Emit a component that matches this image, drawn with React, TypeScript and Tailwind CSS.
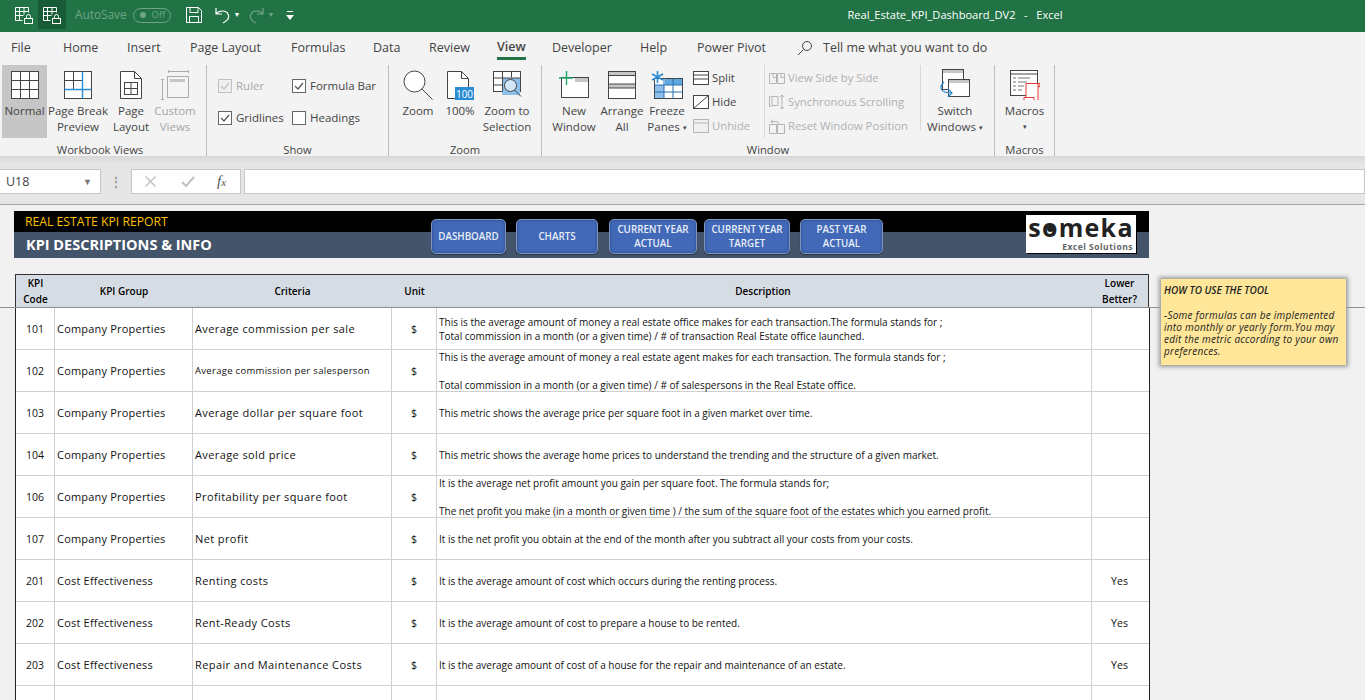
const rows = [
  { code: "101", group: "Company Properties", criteria: "Average commission per sale", unit: "$", lines: ["This is the average amount of money a real estate office makes for each transaction.The formula stands for ;", "Total commission in a month (or a given time) / # of transaction Real Estate office launched."], lower: "" },
  { code: "102", group: "Company Properties", criteria: "Average commission per salesperson", small: true, unit: "$", lines: ["This is the average amount of money a real estate agent makes for each transaction. The formula stands for ;", "", "Total commission in a month (or a given time) / # of salespersons in the Real Estate office."], lower: "" },
  { code: "103", group: "Company Properties", criteria: "Average dollar per square foot", unit: "$", lines: ["This metric shows the average price per square foot in a given market over time."], lower: "" },
  { code: "104", group: "Company Properties", criteria: "Average sold price", unit: "$", lines: ["This metric shows the average home prices to understand the trending and the structure of a given market."], lower: "" },
  { code: "106", group: "Company Properties", criteria: "Profitability per square foot", unit: "$", lines: ["It is the average net profit amount you gain per square foot. The formula stands for;", "", "The net profit you make (in a month or given time ) / the sum of the square foot of the estates which you earned profit."], lower: "" },
  { code: "107", group: "Company Properties", criteria: "Net profit", unit: "$", lines: ["It is the net profit you obtain at the end of the month after you subtract all your costs from your costs."], lower: "" },
  { code: "201", group: "Cost Effectiveness", criteria: "Renting costs", unit: "$", lines: ["It is the average amount of cost which occurs during the renting process."], lower: "Yes" },
  { code: "202", group: "Cost Effectiveness", criteria: "Rent-Ready Costs", unit: "$", lines: ["It is the average amount of cost to prepare a house to be rented."], lower: "Yes" },
  { code: "203", group: "Cost Effectiveness", criteria: "Repair and Maintenance Costs", unit: "$", lines: ["It is the average amount of cost of a house for the repair and maintenance of an estate."], lower: "Yes" },
];

const tabs = [
  { label: "File", cls: "w-[63px] pl-[11px]" },
  { label: "Home", cls: "w-[64px]" },
  { label: "Insert", cls: "w-[63px]" },
  { label: "Page Layout", cls: "w-[101px]" },
  { label: "Formulas", cls: "w-[82px]" },
  { label: "Data", cls: "w-[56px]" },
  { label: "Review", cls: "w-[68px]" },
  { label: "View", cls: "w-[55px]", active: true },
  { label: "Developer", cls: "w-[88px]" },
  { label: "Help", cls: "w-[57px]" },
  { label: "Power Pivot", cls: "w-[100px]" },
];

const gridCols = "grid grid-cols-[39px_138px_199px_45px_655px_58px]";

function TableLock() {
  return (
    <svg width="20" height="20" viewBox="0 0 20 20" fill="none" stroke="#fff" strokeWidth="1">
      <path d="M1.5 2.5h13v5M1.5 2.5v13h7M1.5 6.5h13M1.5 10.5h8M5.5 2.5v13M10 2.5v7" />
      <rect x="10.5" y="13.5" width="8" height="5" />
      <path d="M12.5 13.5v-2a2 2 0 0 1 4 0v2" />
    </svg>
  );
}

function GridIcon() {
  return (
    <svg width="30" height="30" viewBox="0 0 30 30" fill="#fff" stroke="#444" strokeWidth="1">
      <rect x="1.5" y="1.5" width="27" height="27" />
      <path d="M10.5 1.5v27M19.5 1.5v27M1.5 10.5h27M1.5 19.5h27" fill="none" />
    </svg>
  );
}

function PageBreakIcon() {
  return (
    <svg width="30" height="30" viewBox="0 0 30 30" fill="none" stroke="#444" strokeWidth="1">
      <rect x="1.5" y="1.5" width="27" height="27" fill="#fff" />
      <path d="M10.5 1.5v18M1.5 10.5h18" />
      <path d="M1.5 19.5h27M19.5 1.5v27" stroke="#2a8dd4" strokeWidth="1.4" />
    </svg>
  );
}

function PageLayoutIcon() {
  return (
    <svg width="24" height="30" viewBox="0 0 24 30" fill="none" stroke="#444" strokeWidth="1">
      <path d="M1.5 1.5h14l7 7v20h-21z" fill="#fff" />
      <path d="M15.5 1.5v7h7" />
      <rect x="5.5" y="12.5" width="13" height="12" />
      <path d="M5.5 18.5h13M12 12.5v12" />
    </svg>
  );
}

function CustomViewsIcon() {
  return (
    <svg width="30" height="32" viewBox="0 0 30 32" fill="none" stroke="#aaa" strokeWidth="1">
      <path d="M1 10.5h3M2.5 10.5v20M1 30.5h3M8.5 1v3M8.5 2.5h20M28.5 1v3" />
      <rect x="7.5" y="7.5" width="21" height="21" fill="#f4f4f4" />
      <rect x="10" y="10" width="15" height="3" fill="#c6c6c6" stroke="none" />
    </svg>
  );
}

function ZoomIcon() {
  return (
    <svg width="32" height="32" viewBox="0 0 32 32" fill="none" stroke="#444" strokeWidth="1">
      <circle cx="12.5" cy="12.5" r="10.5" fill="#fff" />
      <path d="M20 20l10.5 10.5" />
    </svg>
  );
}

function HundredIcon() {
  return (
    <svg width="28" height="30" viewBox="0 0 28 30" fill="none" stroke="#444" strokeWidth="1">
      <path d="M1.5 1.5h14l7 7v20h-21z" fill="#fff" />
      <path d="M15.5 1.5v7h7" />
      <rect x="9" y="17" width="19" height="13" fill="#2a8dd4" stroke="none" />
      <text x="18.5" y="27.5" textAnchor="middle" fontSize="10" fill="#fff" stroke="none">100</text>
    </svg>
  );
}

function ZoomSelectionIcon() {
  return (
    <svg width="30" height="30" viewBox="0 0 30 30" fill="none" stroke="#444" strokeWidth="1">
      <rect x="1.5" y="1.5" width="27" height="20" fill="#fff" />
      <rect x="10" y="8" width="18" height="17" fill="#8cc0ea" stroke="none" />
      <path d="M1.5 8h27M1.5 15h9M10.5 1.5v20M19.5 1.5v6" />
      <circle cx="18.5" cy="15.5" r="6" fill="#fff" fillOpacity="0.6" />
      <path d="M22.5 20l6.5 6.5" />
    </svg>
  );
}

function NewWindowIcon() {
  return (
    <svg width="30" height="28" viewBox="0 0 30 28" fill="none">
      <rect x="2.5" y="6.5" width="27" height="20" fill="#fff" stroke="#444" />
      <rect x="16" y="7" width="13" height="4" fill="#c6c6c6" />
      <path d="M7.5 0v14M0 7h14" stroke="#21a366" strokeWidth="1.4" />
    </svg>
  );
}

function ArrangeIcon() {
  return (
    <svg width="28" height="28" viewBox="0 0 28 28" fill="#fff" stroke="#444">
      <rect x="0.5" y="0.5" width="27" height="27" />
      <rect x="1" y="1" width="26" height="3.5" fill="#c6c6c6" stroke="none" />
      <rect x="1" y="13" width="26" height="4" fill="#c6c6c6" stroke="none" />
      <path d="M0.5 4.5h27M0.5 13h27M0.5 17h27" fill="none" />
    </svg>
  );
}

function FreezeIcon() {
  return (
    <svg width="32" height="28" viewBox="0 0 32 28" fill="none">
      <rect x="3.5" y="7.5" width="28" height="20" fill="#fff" stroke="#444" />
      <rect x="14" y="8" width="17" height="6" fill="#5ea7df" />
      <rect x="4" y="14" width="9" height="13" fill="#8cc0ea" />
      <path d="M3.5 14h28M3.5 21h28M13 7.5v20M22 7.5v20" stroke="#2a6fb0" />
      <path d="M6.5 0v12M1 3l11 6M12 3L1 9" stroke="#2a8dd4" strokeWidth="1.6" />
    </svg>
  );
}

function SplitIcon() {
  return (
    <svg width="16" height="14" viewBox="0 0 16 14" fill="#fff" stroke="#444">
      <rect x="0.5" y="0.5" width="15" height="13" />
      <path d="M0.5 4h15M0.5 8h15" fill="none" />
    </svg>
  );
}

function HideIcon() {
  return (
    <svg width="16" height="14" viewBox="0 0 16 14" fill="#fff" stroke="#444">
      <rect x="0.5" y="0.5" width="15" height="13" />
      <path d="M1 13L15 1" fill="none" />
    </svg>
  );
}

function UnhideIcon() {
  return (
    <svg width="16" height="14" viewBox="0 0 16 14" fill="#f0f0f0" stroke="#b5b5b5">
      <rect x="0.5" y="0.5" width="15" height="13" />
      <path d="M0.5 4h15" fill="none" />
    </svg>
  );
}

function SideBySideIcon() {
  return (
    <svg width="16" height="12" viewBox="0 0 16 12" fill="none" stroke="#b5b5b5">
      <path d="M0.5 1.5h7v10h-7zM8.5 1.5h7v10h-7zM4 1.5v4h3.5M12 1.5v4h3.5" />
    </svg>
  );
}

function SyncScrollIcon() {
  return (
    <svg width="16" height="16" viewBox="0 0 16 16" fill="none" stroke="#b5b5b5">
      <path d="M2.5 2.5h-2v10h2M3 2.5h6v9H3zM13 1v14M11 3l2-2 2 2M11 13l2 2 2-2" />
    </svg>
  );
}

function ResetWindowIcon() {
  return (
    <svg width="16" height="16" viewBox="0 0 16 16" fill="none" stroke="#b5b5b5">
      <path d="M0.5 6.5h7v9h-7zM8.5 6.5h7v9h-7zM2 3.5h5a3 3 0 0 1 3 3M4 1.5l-2 2 2 2" />
    </svg>
  );
}

function SwitchIcon() {
  return (
    <svg width="32" height="32" viewBox="0 0 32 32" fill="none">
      <rect x="3.5" y="0.5" width="21" height="20" fill="#fff" stroke="#444" />
      <rect x="4" y="1" width="20" height="3" fill="#c6c6c6" />
      <rect x="9.5" y="10.5" width="21" height="17" fill="#fff" stroke="#444" />
      <rect x="10" y="11" width="20" height="3" fill="#c6c6c6" />
      <path d="M5 13c-6 6-3 11 8 11M9 20l4 4-4 4" stroke="#2a8dd4" strokeWidth="1.2" />
    </svg>
  );
}

function MacrosIcon() {
  return (
    <svg width="30" height="30" viewBox="0 0 30 30" fill="none">
      <rect x="0.5" y="0.5" width="27" height="25" fill="#fff" stroke="#444" />
      <path d="M0.5 4h27" stroke="#444" />
      <path d="M3 8h3M8 8h12M3 12h3M8 12h9M3 16h3M8 16h6M3 20h3M8 20h4" stroke="#777" />
      <path d="M16 13.5h12v17H14v-3h2z" fill="#fff" stroke="#e53935" />
      <path d="M28 13.5h2v3h-2M14 27.5h10v3" stroke="#e53935" />
    </svg>
  );
}

function BigButton({ icon, lines, disabled, active, caret, cls }: { icon: React.ReactNode; lines: string[]; disabled?: boolean; active?: boolean; caret?: boolean; cls: string }) {
  return (
    <div className={`${cls} h-[73px] flex flex-col items-center shrink-0 ${active ? "bg-[#c6c6c6]" : ""} ${disabled ? "text-[#a6a6a6]" : "text-[#444]"}`}>
      <div className="h-[31px] mt-[4px] flex items-center justify-center">{icon}</div>
      <div className="mt-[3px] text-center text-[11.5px] leading-[16px] whitespace-nowrap">
        {lines.map((l, i) => (
          <div key={i}>
            {l}
            {caret && i === lines.length - 1 && <span className="text-[7px] ml-[3px] align-middle">▾</span>}
          </div>
        ))}
      </div>
    </div>
  );
}

function Check({ checked, disabled }: { checked?: boolean; disabled?: boolean }) {
  return (
    <svg width="14" height="14" viewBox="0 0 14 14" fill="#fff" className="shrink-0">
      <rect x="0.5" y="0.5" width="13" height="13" stroke={disabled ? "#c0c0c0" : "#666"} fill={disabled ? "#f0f0f0" : "#fff"} />
      {checked && <path d="M3 7l3 3 5-6" fill="none" stroke={disabled ? "#c0c0c0" : "#555"} strokeWidth="1.2" />}
    </svg>
  );
}

function CheckItem({ label, checked, disabled }: { label: string; checked?: boolean; disabled?: boolean }) {
  return (
    <div className={`flex items-center gap-[4px] text-[11.5px] whitespace-nowrap ${disabled ? "text-[#a6a6a6]" : "text-[#444]"}`}>
      <Check checked={checked} disabled={disabled} />
      {label}
    </div>
  );
}

function SmallItem({ icon, label, disabled }: { icon: React.ReactNode; label: string; disabled?: boolean }) {
  return (
    <div className={`h-[24px] flex items-center gap-[3px] text-[11.3px] whitespace-nowrap ${disabled ? "text-[#b0b0b0]" : "text-[#444]"}`}>
      <span className="w-[16px] flex justify-center shrink-0">{icon}</span>
      {label}
    </div>
  );
}

function Group({ label, cls, labelCls, children }: { label: string; cls: string; labelCls?: string; children: React.ReactNode }) {
  return (
    <div className={`${cls} h-[91px] flex flex-col border-r border-[#bdbdbd] shrink-0`}>
      <div className="h-[78px] flex">{children}</div>
      <div className={`${labelCls ?? ""} text-center text-[11.2px] leading-[13px] text-[#444]`}>{label}</div>
    </div>
  );
}

function NavButton({ lines, cls }: { lines: string[]; cls: string }) {
  return (
    <div className={`${cls} h-[35px] rounded-[5px] bg-[#4169b8] border border-[#8195bb] shadow-[inset_0_0_3px_#24468c,0_1px_1px_#2a3648] flex flex-col items-center justify-center text-[9.8px] leading-[14px] font-semibold text-[#e8edf6] shrink-0`}>
      {lines.map((l) => (
        <div key={l}>{l}</div>
      ))}
    </div>
  );
}

export default function App() {
  return (
    <div className="relative w-[1365px] h-[700px] overflow-hidden bg-[#f1f1f1] font-['Open_Sans',sans-serif]">
      {/* title bar */}
      <div className="h-[32px] pb-[2px] bg-[#217346] flex items-center text-white">
        <div className="w-[38px] h-[29px] mt-[-1px] flex items-center justify-end pr-[4px]"><TableLock /></div>
        <div className="w-[28px] h-[29px] mt-[-1px] bg-[#185c37] flex items-center justify-center"><TableLock /></div>
        <span className="ml-[9px] text-[11.8px] text-[#6fa585]">AutoSave</span>
        <div className="ml-[6px] w-[38px] h-[15px] rounded-full border border-[#6fa585] flex items-center text-[9.5px] text-[#6fa585]">
          <span className="ml-[6px] w-[6px] h-[6px] rounded-full bg-[#6fa585]" />
          <span className="ml-[6px]">Off</span>
        </div>
        <svg className="ml-[15px]" width="16" height="16" viewBox="0 0 16 16" fill="none" stroke="#fff">
          <path d="M0.5 0.5h12l3 3v12H0.5zM4 0.5v5h8v-5M3.5 15.5v-6h9v6" />
        </svg>
        <svg className="ml-[13px]" width="16" height="17" viewBox="0 0 16 17" fill="none" stroke="#fff" strokeWidth="1.2">
          <path d="M1 1v6h6M1 7c3-4 10-4 12 0s-1 7-5 9" />
        </svg>
        <span className="ml-[3px] text-[7px]">▼</span>
        <svg className="ml-[8px]" width="16" height="17" viewBox="0 0 16 17" fill="none" stroke="#6fa585" strokeWidth="1.2">
          <path d="M15 1v6H9M15 7c-3-4-10-4-12 0s1 7 5 9" />
        </svg>
        <span className="ml-[3px] text-[7px] text-[#6fa585]">▼</span>
        <svg className="ml-[12px]" width="8" height="9" viewBox="0 0 8 9" fill="#fff">
          <rect x="1" y="0" width="6" height="1" />
          <path d="M0 4h8L4 9z" />
        </svg>
        <div className="ml-[553px] text-[11.1px] whitespace-pre">Real_Estate_KPI_Dashboard_DV2   -   Excel</div>
      </div>

      {/* tabs */}
      <div className="h-[32px] bg-[#f3f3f3] flex items-center text-[12.5px] text-[#444]">
        {tabs.map((t) => (
          <div key={t.label} className={`${t.cls} h-full flex items-center shrink-0 whitespace-nowrap`}>
            {t.active ? (
              <span className="self-start mt-[6px] h-[22px] font-semibold border-b-[3px] border-[#217346]">{t.label}</span>
            ) : (
              t.label
            )}
          </div>
        ))}
        <svg width="16" height="16" viewBox="0 0 16 16" fill="none" stroke="#444" className="shrink-0">
          <circle cx="10" cy="6" r="4.5" />
          <path d="M6.5 9.5L1 15" />
        </svg>
        <span className="ml-[10px]">Tell me what you want to do</span>
      </div>

      {/* ribbon */}
      <div className="h-[92px] bg-[#f3f3f3] flex pt-[1px]">
        <Group label="Workbook Views" cls="w-[207px]" labelCls="pr-[6px]">
          <div className="w-[2px] shrink-0" />
          <BigButton cls="w-[45px]" active icon={<GridIcon />} lines={["Normal"]} />
          <BigButton cls="w-[62px]" icon={<PageBreakIcon />} lines={["Page Break", "Preview"]} />
          <BigButton cls="w-[44px]" icon={<PageLayoutIcon />} lines={["Page", "Layout"]} />
          <BigButton cls="w-[44px]" disabled icon={<CustomViewsIcon />} lines={["Custom", "Views"]} />
        </Group>
        <Group label="Show" cls="w-[182px]">
          <div className="pl-[11px] grid grid-cols-[74px_90px] grid-rows-[32px_32px] pt-[5px]">
            <CheckItem label="Ruler" checked disabled />
            <CheckItem label="Formula Bar" checked />
            <CheckItem label="Gridlines" checked />
            <CheckItem label="Headings" />
          </div>
        </Group>
        <Group label="Zoom" cls="w-[153px]">
          <BigButton cls="w-[52px] ml-[3px]" icon={<ZoomIcon />} lines={["Zoom"]} />
          <BigButton cls="w-[32px]" icon={<HundredIcon />} lines={["100%"]} />
          <BigButton cls="w-[62px]" icon={<ZoomSelectionIcon />} lines={["Zoom to", "Selection"]} />
        </Group>
        <Group label="Window" cls="w-[453px]">
          <BigButton cls="w-[60px] ml-[2px]" icon={<NewWindowIcon />} lines={["New", "Window"]} />
          <BigButton cls="w-[36px]" icon={<ArrangeIcon />} lines={["Arrange", "All"]} />
          <BigButton cls="w-[48px] ml-[3px]" icon={<FreezeIcon />} lines={["Freeze", "Panes"]} caret />
          <div className="ml-[2px] w-[71px] flex flex-col pt-[1px]">
            <SmallItem icon={<SplitIcon />} label="Split" />
            <SmallItem icon={<HideIcon />} label="Hide" />
            <SmallItem icon={<UnhideIcon />} label="Unhide" disabled />
          </div>
          <div className="w-[156px] flex flex-col pt-[1px] border-l border-[#d8d8d8] pl-[4px] h-[73px]">
            <SmallItem icon={<SideBySideIcon />} label="View Side by Side" disabled />
            <SmallItem icon={<SyncScrollIcon />} label="Synchronous Scrolling" disabled />
            <SmallItem icon={<ResetWindowIcon />} label="Reset Window Position" disabled />
          </div>
          <div className="h-[66px] border-l border-[#d8d8d8]" />
          <BigButton cls="w-[68px]" icon={<SwitchIcon />} lines={["Switch", "Windows"]} caret />
        </Group>
        <Group label="Macros" cls="w-[60px]">
          <div className="w-full h-[73px] flex flex-col items-center text-[#444]">
            <div className="h-[31px] mt-[4px] flex items-center"><MacrosIcon /></div>
            <div className="mt-[3px] text-[11.5px] leading-[16px]">Macros</div>
            <div className="text-[7px] leading-[16px]">▾</div>
          </div>
        </Group>
      </div>

      {/* formula bar */}
      <div className="h-[49px] bg-[#e6e6e6] bg-[linear-gradient(#d8d8d8,#e6e6e6_8px)] border-b border-[#a6a6a6] flex items-start pt-[13px]">
        <div className="w-[101px] h-[25px] bg-white border-y border-r border-[#c6c6c6] flex items-center justify-between pl-[6px] pr-[8px] pt-[1px] text-[12.5px] text-[#444]">
          U18
          <span className="text-[9px] text-[#777]">▼</span>
        </div>
        <div className="w-[30px] h-[25px] flex items-center justify-center text-[#9a9a9a] text-[12px] font-bold">⋮</div>
        <div className="w-[110px] h-[25px] bg-white border border-[#c6c6c6] flex items-center text-[#b5b5b5]">
          <svg className="ml-[13px]" width="11" height="11" viewBox="0 0 11 11" stroke="#c0c0c0" strokeWidth="1.4"><path d="M0.5 0.5l10 10M10.5 0.5l-10 10" /></svg>
          <svg className="ml-[25px]" width="14" height="11" viewBox="0 0 14 11" fill="none" stroke="#c0c0c0" strokeWidth="2"><path d="M1 6l4 4 8-9" /></svg>
          <span className="ml-[22px] font-['Liberation_Serif',serif] italic text-[15px] text-[#555]">f<span className="text-[11px]">x</span></span>
        </div>
        <div className="ml-[3px] flex-1 h-[25px] bg-white border border-[#c6c6c6]" />
      </div>

      {/* frozen header */}
      <div className="h-[103px] border-b border-[#8f8f8f] pl-[14px] pt-[6px] flex flex-col">
        <div className="w-[1135px] h-[47px] shrink-0 flex items-start bg-[linear-gradient(#000_0,#000_21px,#44546a_21px,#44546a_100%)]">
          <div className="w-[417px] shrink-0 pl-[11px]">
            <div className="h-[21px] pt-[2px] flex items-center text-[12.2px] text-[#ffc000]">REAL ESTATE KPI REPORT</div>
            <div className="h-[26px] pl-[1px] flex items-center text-[14.5px] font-bold text-white">KPI DESCRIPTIONS &amp; INFO</div>
          </div>
          <div className="flex pt-[8px]">
            <NavButton cls="w-[75px]" lines={["DASHBOARD"]} />
            <NavButton cls="w-[82px] ml-[10px]" lines={["CHARTS"]} />
            <NavButton cls="w-[88px] ml-[11px]" lines={["CURRENT YEAR", "ACTUAL"]} />
            <NavButton cls="w-[86px] ml-[7px]" lines={["CURRENT YEAR", "TARGET"]} />
            <NavButton cls="w-[83px] ml-[10px]" lines={["PAST YEAR", "ACTUAL"]} />
          </div>
          <div className="ml-[143px] mt-[4px] w-[110px] h-[38px] bg-white shadow-[1px_1px_0_#000] shrink-0 flex flex-col items-center">
            <div className="relative text-[25px] leading-[24px] tracking-[1.3px] text-[#222] font-bold">
              someka
              <span className="absolute left-[19px] top-[10px] w-[7px] h-[7px] rounded-full bg-[#222]" />
            </div>
            <div className="self-end pr-[3px] text-[8.5px] leading-[10px] font-bold tracking-[0.5px] text-[#666] mt-[3px]">Excel Solutions</div>
          </div>
        </div>
        <div className={`${gridCols} mt-[16px] ml-[1px] w-[1134px] h-[33px] bg-[#d6dce4] border-x border-t border-[#333] text-[10px] font-semibold text-black leading-[16px] text-center`}>
          <div className="flex items-center justify-center">KPI<br />Code</div>
          <div className="flex items-center justify-center">KPI Group</div>
          <div className="flex items-center justify-center">Criteria</div>
          <div className="flex items-center justify-center">Unit</div>
          <div className="flex items-center justify-center pr-[3px]">Description</div>
          <div className="flex items-center justify-center pr-[3px]">Lower<br />Better?</div>
        </div>
      </div>

      {/* table body */}
      <div className="ml-[15px] w-[1135px] border-x border-x-[#222] bg-white">
        {rows.concat([{ code: "", group: "", criteria: "", unit: "", lines: [], lower: "" }]).map((r, i) => (
          <div key={i} className={`${gridCols} grid-rows-[41px] h-[42px] border-b border-[#d0d0d0] text-[#111]`}>
            <div className="border-r border-[#d0d0d0] flex items-center justify-center pt-[2px] text-[10.5px]">{r.code}</div>
            <div className="border-r border-[#d0d0d0] flex items-center pl-[2px] pt-[2px] text-[11px] tracking-[0.2px] whitespace-nowrap">{r.group}</div>
            <div className={`border-r border-[#d0d0d0] flex items-center pl-[2px] pt-[2px] whitespace-nowrap ${"small" in r && r.small ? "text-[9.5px] tracking-[0.3px]" : "text-[11px] tracking-[0.4px]"}`}>{r.criteria}</div>
            <div className="border-r border-[#d0d0d0] flex items-center justify-center pt-[2px] text-[10.5px]">{r.unit}</div>
            <div className="border-r border-[#d0d0d0] flex flex-col justify-center pl-[2px] pt-[1px] text-[10px] leading-[14px] whitespace-pre min-h-0">
              {r.lines.map((l, k) => (
                <div key={k} className="h-[14px] shrink-0">{l}</div>
              ))}
            </div>
            <div className="flex items-center justify-center pt-[2px] pr-[3px] text-[10.5px]">{r.lower}</div>
          </div>
        ))}
      </div>

      {/* note floats over the sheet */}
      <div className="absolute left-[1161px] top-[279px] w-[185px] h-[86px] bg-[#ffe699] shadow-[0_0_4px_2px_#9a9a9a] pl-[3px] pt-[5px] text-[10px] italic text-[#222] leading-[12px]">
        <div className="font-semibold h-[24px]">HOW TO USE THE TOOL</div>
        <div className="mt-[1px] tracking-[0.25px] whitespace-nowrap">-Some formulas can be implemented<br />into monthly or yearly form.You may<br />edit the metric according to your own<br />preferences.</div>
      </div>
    </div>
  );
}
